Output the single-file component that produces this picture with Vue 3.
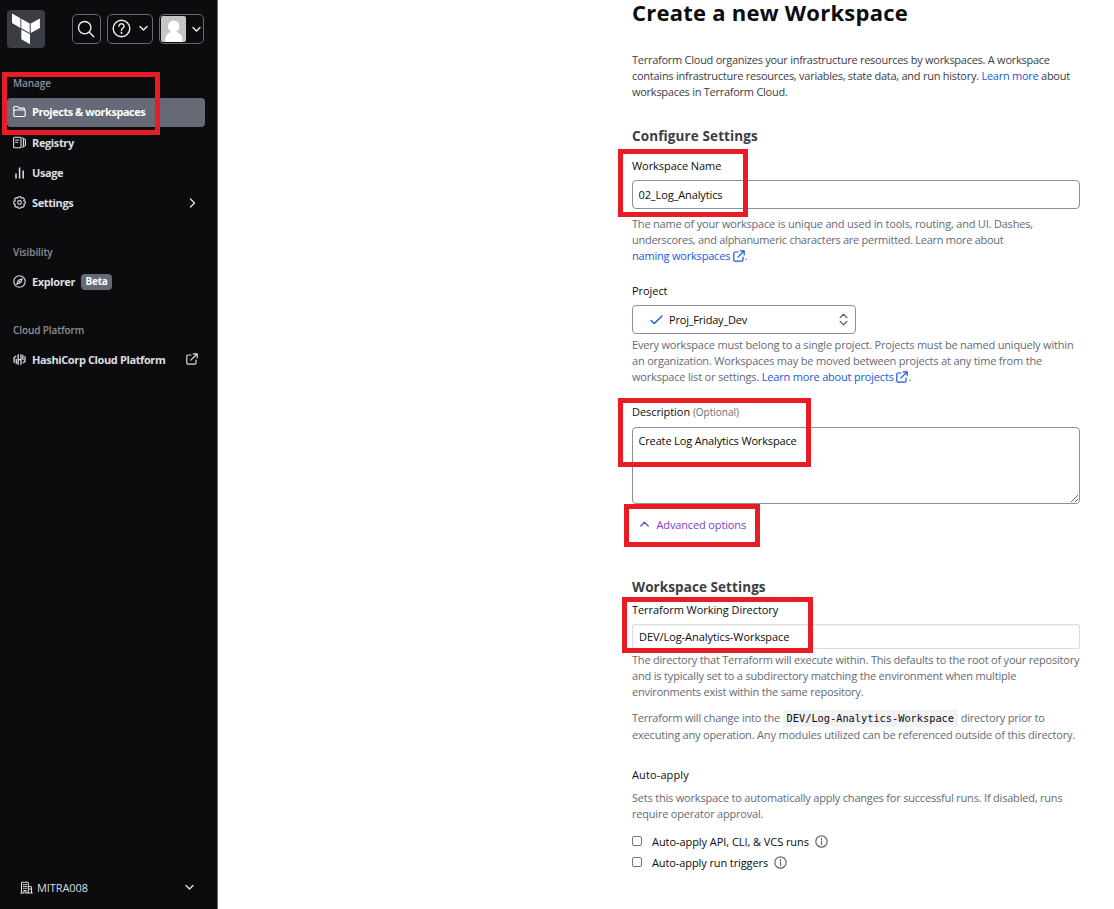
<script setup>
import { ref } from 'vue'

const name = ref('02_Log_Analytics')
const description = ref('Create Log Analytics Workspace')
const directory = ref('DEV/Log-Analytics-Workspace')
</script>

<template>
  <div class="page">
    <aside class="sidebar">
      <header class="top">
        <div class="logo">
          <svg width="38" height="38" viewBox="0 0 38 38" fill="#fff">
            <path d="M5 3.5l8.4 4.8v9.6L5 13.1zM14.3 8.8l8.4 4.8v9.4l-8.4-4.7zM23.7 13.6l9.2-5v9.5l-9.2 5zM14.3 19.4l8.7 4.9v9.9l-8.7-4.9z" />
          </svg>
        </div>
        <button class="tool search">
          <svg width="18" height="18" viewBox="0 0 18 18" class="line"><circle cx="7.7" cy="7.7" r="6.2" /><path d="M12.3 12.3l4.5 4.5" /></svg>
        </button>
        <button class="tool help">
          <svg width="19" height="19" viewBox="0 0 19 19" class="line"><circle cx="9.5" cy="9.5" r="8.3" /><path d="M6.9 7.2a2.6 2.4 0 1 1 4 2c-.9.6-1.4 1-1.4 2" /><path d="M9.5 13.3v1.1" /></svg>
          <svg width="9" height="7" viewBox="0 0 9 7" class="line"><path d="M1 1.5l3.5 3.6L8 1.5" /></svg>
        </button>
        <button class="tool user">
          <svg width="25" height="26" viewBox="0 0 25 26"><rect width="25" height="26" rx="2" fill="#c5c5c5" /><ellipse cx="12.7" cy="10.5" rx="5.7" ry="6" fill="#fff" /><path d="M4 26c0-6 2-9 6-10h5.500c4 1 6 4 6 10z" fill="#fff" /></svg>
          <svg width="9" height="7" viewBox="0 0 9 7" class="line"><path d="M1 1.500l3.500 3.600L8 1.500" /></svg>
        </button>
      </header>

      <nav>
        <h4 class="group first">Manage</h4>
        <a class="item active">
          <svg class="icon" viewBox="0 0 13 13"><path d="M.8 10V2.500q0-1 1-1h2.800l1.400 1.600h4.500q1 0 1 1v1M.8 10.200q0 1.300 1.200 1.300h9q1.200 0 1.200-1.200V6q0-1-1-1H2.500Q.8 5 .8 6.500z" /></svg>
          <span>Projects &amp; workspaces</span>
        </a>
        <a class="item">
          <svg class="icon" viewBox="0 0 13 13"><rect x=".6" y="1.300" width="7.400" height="10.400" rx="1" /><path d="M2.600 4h3.200M2.600 6.200h2.200M9.300 1.800q1.100.2 1.100 1.200v7q0 1-1.100 1.200M11.300 2.800q1.100.3 1.100 1.200v5q0 .9-1.100 1.200" /></svg>
          <span>Registry</span>
        </a>
        <a class="item">
          <svg class="icon thick" viewBox="0 0 13 13"><path d="M3 8v4M6.600 2v10M10.200 5v7" /></svg>
          <span>Usage</span>
        </a>
        <a class="item">
          <svg class="icon" viewBox="0 0 13 13"><circle cx="6.500" cy="6.500" r="1.900" /><path d="M5.300.8h2.400l.5 1.500 1.600-.7 1.600 1.600-.7 1.600 1.500.5v2.400l-1.500.5.7 1.600-1.600 1.600-1.600-.7-.5 1.500H5.300l-.5-1.500-1.600.7-1.600-1.600.7-1.600-1.500-.5V5.300l1.500-.5-.7-1.600 1.600-1.600 1.600.7z" /></svg>
          <span>Settings</span>
          <svg class="end chev" width="7" height="10" viewBox="0 0 7 10"><path d="M1.500 1l4 4-4 4" /></svg>
        </a>
        <h4 class="group">Visibility</h4>
        <a class="item">
          <svg class="icon" viewBox="0 0 13 13"><circle cx="6.500" cy="6.500" r="5.700" /><path d="M9.300 3.700L7.700 7.600 3.700 9.300l1.700-4z" /><path d="M6 7l1-1" /></svg>
          <span>Explorer</span><em class="badge">Beta</em>
        </a>
        <h4 class="group last">Cloud Platform</h4>
        <a class="item">
          <svg class="icon hashi" viewBox="0 0 13 13"><path d="M1.100 9.700V4.500L3.300 3.100M3.300 11V6M5.200 1.200v10.600M5.200 6.700h2.800M8 1.200v10.600M9.900 2v5M9.900 9.900L12 8.500V3.300" /></svg>
          <span>HashiCorp Cloud Platform</span>
          <svg class="end ext" viewBox="0 0 12 12"><path d="M5 2H2Q.8 2 .8 3.200V10q0 1.200 1.200 1.200h6.800q1.200 0 1.200-1.200V7M7.200.8h4v4M11 1L4.800 7.200" /></svg>
        </a>
      </nav>

      <footer class="org">
        <svg class="icon" viewBox="0 0 13 13"><path d="M1.500 12V2.200q0-1 1-1h4.800q1 0 1 1V12M8.300 5.500h2q1.200 0 1.200 1.200V12M.8 12h3M6.300 12h6M4 12V9.500h2V12M3.500 3.500h.8M5.600 3.500h.8M3.500 5.400h.8M5.600 5.400h.8M3.500 7.300h.8M5.600 7.300h.8M9.900 7.500v1" /></svg>
        <span>MITRA008</span>
        <svg width="9" height="7" viewBox="0 0 9 7" class="line"><path d="M1 1.500l3.500 3.600L8 1.500" /></svg>
      </footer>
    </aside>

    <main class="content">
      <h1>Create a new Workspace</h1>
      <p class="intro">
        Terraform Cloud organizes your infrastructure resources by workspaces. A workspace<br />
        contains infrastructure resources, variables, state data, and run history. <a>Learn more</a> about<br />
        workspaces in Terraform Cloud.
      </p>

      <h2>Configure Settings</h2>
      <label class="label">Workspace Name</label>
      <input v-model="name" class="field" type="text" spellcheck="false" />
      <p class="hint name-hint">
        The name of your workspace is unique and used in tools, routing, and UI. Dashes,<br />
        <span class="tight">underscores, and alphanumeric characters are permitted. Learn more about</span><br />
        <a>naming workspaces <svg class="ext" viewBox="0 0 12 12"><path d="M5 2H2Q.8 2 .8 3.200V10q0 1.200 1.200 1.200h6.800q1.200 0 1.200-1.200V7M7.200.8h4v4M11 1L4.800 7.200" /></svg></a>.
      </p>

      <label class="label project-label">Project</label>
      <div class="select">
        <svg class="check" width="13" height="10" viewBox="0 0 13 10"><path d="M1 5.500L4.300 8.500 12 1" /></svg>
        <span>Proj_Friday_Dev</span>
        <svg class="sort" width="9" height="13" viewBox="0 0 9 13"><path d="M1.200 4.500l3.300-3.300 3.300 3.300M1.200 8.500l3.300 3.300 3.300-3.300" /></svg>
      </div>
      <p class="hint project-hint">
        Every workspace must belong to a single project. Projects must be named uniquely within<br />
        an organization. Workspaces may be moved between projects at any time from the<br />
        workspace list or settings. <a>Learn more about projects <svg class="ext" viewBox="0 0 12 12"><path d="M5 2H2Q.8 2 .8 3.200V10q0 1.200 1.200 1.200h6.800q1.200 0 1.200-1.200V7M7.200.8h4v4M11 1L4.800 7.200" /></svg></a>.
      </p>

      <label class="label desc-label">Description <small>(Optional)</small></label>
      <textarea v-model="description" class="area" spellcheck="false"></textarea>

      <button class="advanced">
        <svg width="9" height="6" viewBox="0 0 9 6"><path d="M.8 5l3.700-3.700L8.200 5" /></svg>
        <span>Advanced options</span>
      </button>

      <h2 class="settings-title">Workspace Settings</h2>
      <label class="label dir-label">Terraform Working Directory</label>
      <input v-model="directory" class="field plain" type="text" spellcheck="false" />
      <p class="hint dir-hint">
        The directory that Terraform will execute within. This defaults to the root of your repository<br />
        <span class="loose">and is typically set to a subdirectory matching the environment when multiple</span><br />
        environments exist within the same repository.
      </p>
      <p class="hint change-hint">
        <span class="lead">Terraform will change into the </span><code>DEV/Log-Analytics-Workspace</code> directory prior to<br />
        executing any operation. Any modules utilized can be referenced outside of this directory.
      </p>

      <h3 class="label auto-label">Auto-apply</h3>
      <p class="hint auto-hint">
        Sets this workspace to automatically apply changes for successful runs. If disabled, runs<br />
        require operator approval.
      </p>
      <label class="option"><i class="box"></i><span class="wide">Auto-apply API, CLI, &amp; VCS runs</span>
        <svg class="info" viewBox="0 0 13 13"><circle cx="6.500" cy="6.500" r="5.700" /><path d="M6.500 6v3.600M6.500 3.400v1.200" /></svg>
      </label>
      <label class="option"><i class="box"></i><span>Auto-apply run triggers</span>
        <svg class="info" viewBox="0 0 13 13"><circle cx="6.500" cy="6.500" r="5.700" /><path d="M6.500 6v3.600M6.500 3.400v1.200" /></svg>
      </label>
    </main>

    <div class="mark mark-nav"></div>
    <div class="mark mark-name"></div>
    <div class="mark mark-desc"></div>
    <div class="mark mark-advanced"></div>
    <div class="mark mark-dir"></div>
  </div>
</template>

<style>
body { margin: 0; background: #fff; }
</style>

<style scoped>
* { box-sizing: border-box; }
.page {
  position: relative;
  display: flex;
  width: 1114px;
  height: 909px;
  overflow: hidden;
  font-family: "Open Sans", "Noto Sans", sans-serif;
  font-size: 11px;
  letter-spacing: -0.2px;
}
svg { display: block; flex: none; fill: none; stroke-linecap: round; stroke-linejoin: round; }
.logo svg { fill: #fff; }
button { font: inherit; letter-spacing: inherit; }

.sidebar {
  display: flex;
  flex-direction: column;
  width: 218px;
  height: 909px;
  background: #0c0c0e;
  border-right: 1px solid #656a76;
  color: #dedfe3;
}
.top { display: flex; align-items: center; height: 38px; margin: 10px 0 0 7px; }
.logo { width: 38px; height: 38px; border-radius: 4px; background: #3b3d45; overflow: hidden; margin-right: 27px; }
.tool {
  display: flex;
  align-items: center;
  height: 30px;
  padding: 0 1px 1px 0;
  border: 1px solid #656a76;
  border-radius: 5px;
  background: #0c0c0e;
}
.line { stroke: #efeff1; stroke-width: 1.4; }
.search { width: 29px; justify-content: center; margin-right: 6px; }
.help { width: 46px; padding: 0 4px 1px; justify-content: space-between; margin-right: 6px; }
.user { width: 45px; padding: 0 2px 0 1px; justify-content: space-between; }

.group { margin: 25px 0 0 13px; height: 18px; line-height: 18px; font-size: 10px; font-weight: 600; letter-spacing: -0.1px; color: #8c909c; }
.group.first { margin-top: 26px; }
.group.last { margin-top: 24px; }
.item {
  display: flex;
  align-items: center;
  height: 30px;
  padding: 0 7px 2px 6px;
  margin: 0 12px 0 7px;
  font-weight: 700;
  letter-spacing: -0.38px;
  white-space: nowrap;
  color: #dedfe3;
}
.group + .item { margin-top: 6px; }
.item.active { height: 29px; margin-bottom: 1px; border-radius: 4px; background: #656a76; color: #fff; }
.active span { letter-spacing: -0.47px; }
.icon { width: 13px; height: 13px; stroke: currentColor; stroke-width: 1.100; margin-right: 6px; }
.thick { stroke-width: 1.500; }
.hashi { stroke-width: 1.300; stroke-linecap: butt; }
.end { margin-left: auto; }
.chev { stroke: currentColor; stroke-width: 1.400; margin: 2px 2px 0 auto; }
.ext { width: 12px; height: 12px; stroke: currentColor; stroke-width: 1.200; }
.badge { margin: 2px 0 0 6px; width: 31px; height: 16px; border-radius: 4px; background: #656a76; color: #fff; font-style: normal; font-size: 10px; line-height: 15px; text-align: center; letter-spacing: -0.2px; }
.org { display: flex; align-items: center; height: 20px; margin: auto 23px 12px 20px; letter-spacing: -0.08px; }
.org .icon { margin-right: 4px; }
.org .line { margin-left: auto; stroke: #dedfe3; }

.content { display: flex; flex-direction: column; align-items: flex-start; width: 448px; margin-left: 414px; white-space: nowrap; }
h1 { margin: 0; height: 24px; line-height: 24px; font-size: 22px; font-weight: 700; letter-spacing: 0.25px; color: #0c0c0e; }
h2 { margin: 26px 0 0; height: 20px; line-height: 20px; font-size: 13.500px; font-weight: 700; letter-spacing: 0.12px; color: #3b3d45; }
p { margin: 0; line-height: 16px; }
.intro { margin-top: 28px; color: #3b3d45; letter-spacing: -0.26px; }
p a { color: #1c57d9; }
.label { display: block; margin: 12px 0 0; height: 16px; line-height: 16px; font-size: 11px; font-weight: 500; letter-spacing: -0.06px; color: #0c0c0e; }
.field {
  display: block;
  width: 448px;
  height: 29px;
  margin: 6px 0 0;
  padding: 0 5.500px;
  border: 1px solid #8c909c;
  border-radius: 4px;
  outline: 0;
  background: #fff;
  font: 11px "Open Sans", sans-serif;
  letter-spacing: -0.12px;
  color: #0c0c0e;
}
.hint { color: #656a76; }
.tight { letter-spacing: -0.28px; }
.loose { letter-spacing: -0.18px; }
.name-hint { margin-top: 7px; }
.hint a .ext { display: inline-block; vertical-align: -1.500px; }
.project-label { margin-top: 19px; }
.select { display: flex; align-items: center; width: 224px; height: 29px; margin-top: 6px; padding: 0 7px 0 17px; border: 1px solid #8c909c; border-radius: 4px; color: #0c0c0e; }
.check { stroke: #1c57d9; stroke-width: 1.400; margin-right: 6px; }
.sort { stroke: #656a76; stroke-width: 1.400; margin-left: auto; }
.project-hint { margin-top: 3px; letter-spacing: -0.19px; }
.desc-label { margin-top: 19px; }
.desc-label small { font-size: 10px; letter-spacing: 0; color: #656a76; font-weight: 400; }
.area {
  display: block;
  width: 448px;
  height: 77px;
  margin: 7px 0 0;
  padding: 5px 5.500px;
  border: 1px solid #8c909c;
  border-radius: 4px;
  outline: 0;
  resize: vertical;
  font: 11px/16px "Open Sans", sans-serif;
  letter-spacing: -0.15px;
  color: #0c0c0e;
}
.advanced { display: flex; align-items: center; gap: 7.500px; height: 24px; margin: 8px 0 1px; padding: 0 8px; border: 0; background: none; color: #7b42bc; letter-spacing: -0.14px; }
.advanced svg { stroke: #7b42bc; stroke-width: 1.300; }
.settings-title { margin-top: 40px; letter-spacing: 0.08px; }
.dir-label { margin-top: 5px; }
.field.plain { height: 25px; padding: 0 6px; border-color: #dcdee2; border-radius: 2px; letter-spacing: -0.06px; box-shadow: inset 0 1px 2px #0000000d; }
.dir-hint { height: 48px; margin-top: 3px; letter-spacing: -0.21px; }
.change-hint { height: 34px; margin-top: 8.500px; line-height: 17px; letter-spacing: -0.18px; }
.lead { letter-spacing: -0.22px; }
code { padding: 2px 4px 3px; line-height: 1; background: #f1f2f3; color: #0c0c0e; font-family: "DejaVu Sans Mono", monospace; font-size: 10.300px; letter-spacing: 0; }
.auto-label { margin-top: 24.500px; letter-spacing: 0.12px; }
.auto-hint { margin-top: 7px; }
.option { display: flex; align-items: center; height: 20px; color: #0c0c0e; letter-spacing: -0.1px; }
.auto-hint + .option { margin-top: 9px; }
.option + .option { margin-top: 1px; }
.wide { letter-spacing: -0.06px; }
.box { width: 10px; height: 10px; border: 1px solid #767676; border-radius: 2px; margin-right: 10px; }
.info { width: 13px; height: 13px; margin-left: 6px; stroke: #656a76; stroke-width: 1.200; }

.mark { position: absolute; border: 5px solid #e81c24; pointer-events: none; }
.mark-nav { left: 2px; top: 72px; width: 158px; height: 63px; }
.mark-name { left: 618px; top: 149px; width: 130px; height: 68px; }
.mark-desc { left: 618px; top: 398px; width: 193px; height: 69px; }
.mark-advanced { left: 624px; top: 504px; width: 136px; height: 43px; }
.mark-dir { left: 622px; top: 597px; width: 191px; height: 56px; }
</style>
